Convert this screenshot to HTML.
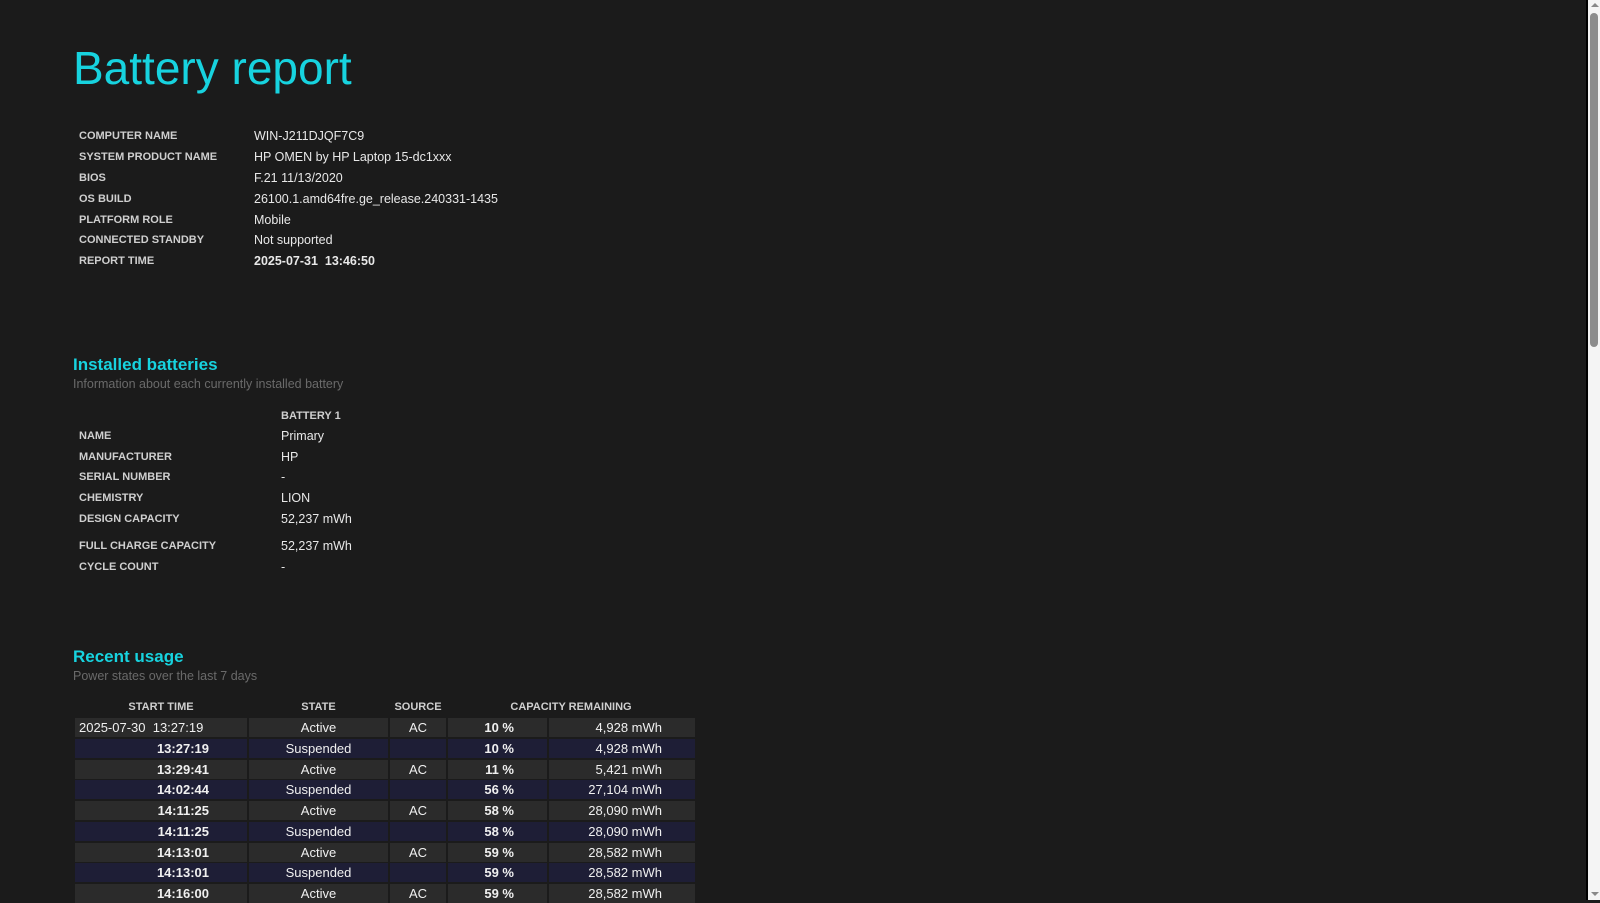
<!DOCTYPE html>
<html><head><meta charset="utf-8"><style>
*{margin:0;padding:0;box-sizing:border-box}
html,body{width:1600px;height:900px;overflow:hidden;background:#1b1b1b;font-family:"Liberation Sans",sans-serif;color:#e6e6e6}
.a{position:absolute;white-space:nowrap;line-height:20px;height:20px}
.l{font-size:11px;font-weight:bold;color:#cfcfcf;left:79px}
.v{font-size:12.5px;color:#e8e8e8}
.h{color:#17d3df}
.sub{font-size:12.5px;color:#6a6a6a}
.row{position:absolute;left:75px;height:19px;font-size:13px;color:#f0f0f0}
.row div{position:absolute;top:0;height:19px;line-height:19px}
.g div{background:#2b2b2b}
.b div{background:#1e1e36}
.c1{left:0;width:172px;text-align:right;padding-right:38px;font-weight:bold}
.c2{left:174px;width:139px;text-align:center}
.c3{left:315px;width:56px;text-align:center}
.c4{left:373px;width:99px;text-align:right;padding-right:33px;font-weight:bold}
.c5{left:474px;width:146px;text-align:right;padding-right:33px}
.th{position:absolute;top:697px;font-size:11px;font-weight:bold;color:#cfcfcf;line-height:20px;text-align:center}
</style></head><body>
<div class="a h" style="left:73px;top:40px;font-size:46px;line-height:56px;height:56px">Battery report</div>

<div class="a l" style="top:126px">COMPUTER NAME</div><div class="a v" style="left:254px;top:126px">WIN-J211DJQF7C9</div>
<div class="a l" style="top:147px">SYSTEM PRODUCT NAME</div><div class="a v" style="left:254px;top:147px">HP OMEN by HP Laptop 15-dc1xxx</div>
<div class="a l" style="top:168px">BIOS</div><div class="a v" style="left:254px;top:168px">F.21 11/13/2020</div>
<div class="a l" style="top:189px">OS BUILD</div><div class="a v" style="left:254px;top:189px">26100.1.amd64fre.ge_release.240331-1435</div>
<div class="a l" style="top:210px">PLATFORM ROLE</div><div class="a v" style="left:254px;top:210px">Mobile</div>
<div class="a l" style="top:230px">CONNECTED STANDBY</div><div class="a v" style="left:254px;top:230px">Not supported</div>
<div class="a l" style="top:251px">REPORT TIME</div><div class="a v" style="left:254px;top:251px;font-weight:bold">2025-07-31&nbsp;&nbsp;13:46:50</div>

<div class="a h" style="left:73px;top:354px;font-size:17px;font-weight:bold;line-height:22px;height:22px">Installed batteries</div>
<div class="a sub" style="left:73px;top:374px">Information about each currently installed battery</div>
<div class="a l" style="left:281px;top:406px">BATTERY 1</div>
<div class="a l" style="top:426px">NAME</div><div class="a v" style="left:281px;top:426px">Primary</div>
<div class="a l" style="top:447px">MANUFACTURER</div><div class="a v" style="left:281px;top:447px">HP</div>
<div class="a l" style="top:467px">SERIAL NUMBER</div><div class="a v" style="left:281px;top:467px">-</div>
<div class="a l" style="top:488px">CHEMISTRY</div><div class="a v" style="left:281px;top:488px">LION</div>
<div class="a l" style="top:509px">DESIGN CAPACITY</div><div class="a v" style="left:281px;top:509px">52,237 mWh</div>
<div class="a l" style="top:536px">FULL CHARGE CAPACITY</div><div class="a v" style="left:281px;top:536px">52,237 mWh</div>
<div class="a l" style="top:557px">CYCLE COUNT</div><div class="a v" style="left:281px;top:557px">-</div>

<div class="a h" style="left:73px;top:646px;font-size:17px;font-weight:bold;line-height:22px;height:22px">Recent usage</div>
<div class="a sub" style="left:73px;top:666px">Power states over the last 7 days</div>

<div class="th" style="left:75px;width:172px">START TIME</div>
<div class="th" style="left:249px;width:139px">STATE</div>
<div class="th" style="left:390px;width:56px">SOURCE</div>
<div class="th" style="left:448px;width:246px">CAPACITY REMAINING</div>

<div class="row g" style="top:718px"><div class="c1" style="text-align:left;padding-left:4px;font-weight:normal">2025-07-30&nbsp;&nbsp;13:27:19</div><div class="c2">Active</div><div class="c3">AC</div><div class="c4">10 %</div><div class="c5">4,928 mWh</div></div>
<div class="row b" style="top:739px"><div class="c1">13:27:19</div><div class="c2">Suspended</div><div class="c3"></div><div class="c4">10 %</div><div class="c5">4,928 mWh</div></div>
<div class="row g" style="top:760px"><div class="c1">13:29:41</div><div class="c2">Active</div><div class="c3">AC</div><div class="c4">11 %</div><div class="c5">5,421 mWh</div></div>
<div class="row b" style="top:780px"><div class="c1">14:02:44</div><div class="c2">Suspended</div><div class="c3"></div><div class="c4">56 %</div><div class="c5">27,104 mWh</div></div>
<div class="row g" style="top:801px"><div class="c1">14:11:25</div><div class="c2">Active</div><div class="c3">AC</div><div class="c4">58 %</div><div class="c5">28,090 mWh</div></div>
<div class="row b" style="top:822px"><div class="c1">14:11:25</div><div class="c2">Suspended</div><div class="c3"></div><div class="c4">58 %</div><div class="c5">28,090 mWh</div></div>
<div class="row g" style="top:843px"><div class="c1">14:13:01</div><div class="c2">Active</div><div class="c3">AC</div><div class="c4">59 %</div><div class="c5">28,582 mWh</div></div>
<div class="row b" style="top:863px"><div class="c1">14:13:01</div><div class="c2">Suspended</div><div class="c3"></div><div class="c4">59 %</div><div class="c5">28,582 mWh</div></div>
<div class="row g" style="top:884px"><div class="c1">14:16:00</div><div class="c2">Active</div><div class="c3">AC</div><div class="c4">59 %</div><div class="c5">28,582 mWh</div></div>

<div style="position:absolute;left:1586px;top:0;width:2px;height:900px;background:#000"></div>
<div style="position:absolute;left:1588px;top:0;width:12px;height:900px;background:#f4f4f4"></div>
<div style="position:absolute;left:1590px;top:13px;width:8px;height:334px;background:#8c8c8c;border-radius:4px"></div>
<div style="position:absolute;left:1591px;top:3px;width:0;height:0;border-left:4px solid transparent;border-right:4px solid transparent;border-bottom:4px solid #888"></div>
<div style="position:absolute;left:1591px;top:892px;width:0;height:0;border-left:4px solid transparent;border-right:4px solid transparent;border-top:4px solid #888"></div>
</body></html>
